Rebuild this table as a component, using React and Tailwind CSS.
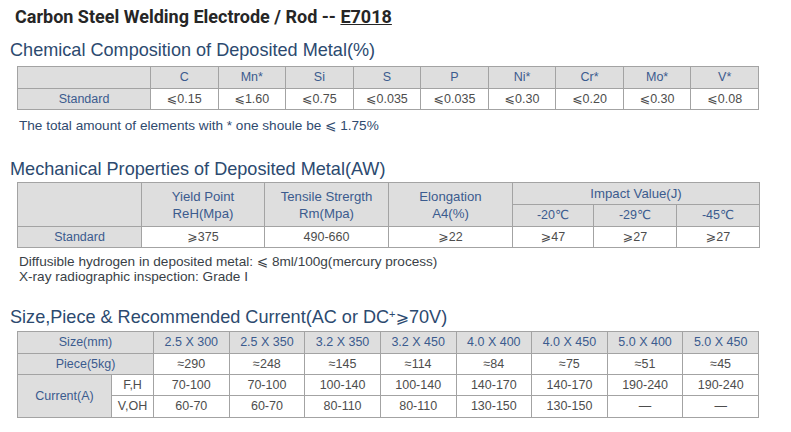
import React from "react";

const font = { fontFamily: '"Liberation Sans", Arial, "DejaVu Sans", sans-serif' };

const chemHead = ["C", "Mn*", "Si", "S", "P", "Ni*", "Cr*", "Mo*", "V*"];
const chemVals = ["⩽0.15", "⩽1.60", "⩽0.75", "⩽0.035", "⩽0.035", "⩽0.30", "⩽0.20", "⩽0.30", "⩽0.08"];

const sizes = [
  { size: "2.5 X 300", piece: "≈290", fh: "70-100", voh: "60-70" },
  { size: "2.5 X 350", piece: "≈248", fh: "70-100", voh: "60-70" },
  { size: "3.2 X 350", piece: "≈145", fh: "100-140", voh: "80-110" },
  { size: "3.2 X 450", piece: "≈114", fh: "100-140", voh: "80-110" },
  { size: "4.0 X 400", piece: "≈84", fh: "140-170", voh: "130-150" },
  { size: "4.0 X 450", piece: "≈75", fh: "140-170", voh: "130-150" },
  { size: "5.0 X 400", piece: "≈51", fh: "190-240", voh: "—" },
  { size: "5.0 X 450", piece: "≈45", fh: "190-240", voh: "—" },
];

const cell = "border border-[#a3a3a3] text-center p-0";
const gray = "bg-[#dedede] text-[#3b5b8e]";
const val = "bg-white text-[#4d4d4d]";

function Heading({ children, className }) {
  return (
    <h2 className={"pl-[10px] text-[18.1px] leading-[24px] text-[#2c4a6f] " + className}>
      {children}
    </h2>
  );
}

export default function App() {
  return (
    <div className="w-[791px] h-[432px] bg-white overflow-hidden" style={font}>
      <h1
        className="pl-[15px] pt-[5px] text-[18px] leading-[24px] font-bold text-[#262626]"
        style={{ fontFamily: 'Roboto, "Liberation Sans", sans-serif' }}
      >
        Carbon Steel Welding Electrode / Rod -- <span className="underline">E7018</span>
      </h1>

      <Heading className="mt-[9px]">Chemical Composition of Deposited Metal(%)</Heading>
      <div className="pl-[17px] mt-[4px]">
        <table className="table-fixed border-collapse w-[742px] text-[12.5px]">
          <colgroup>
            <col className="w-[133px]" />
            {chemHead.map((h) => (
              <col key={h} />
            ))}
          </colgroup>
          <tbody>
            <tr className="h-[22px]">
              <td className={cell + " " + gray}></td>
              {chemHead.map((h) => (
                <td key={h} className={cell + " " + gray}>{h}</td>
              ))}
            </tr>
            <tr className="h-[21px]">
              <td className={cell + " " + gray}>Standard</td>
              {chemVals.map((v, i) => (
                <td key={i} className={cell + " " + val}>{v}</td>
              ))}
            </tr>
          </tbody>
        </table>
      </div>
      <p className="pl-[19px] mt-[8px] text-[13.6px] leading-[16px] text-[#2f4a6e]">
        The total amount of elements with * one shoule be ⩽ 1.75%
      </p>

      <Heading className="mt-[23px]">Mechanical Properties of Deposited Metal(AW)</Heading>
      <div className="pl-[17px] mt-[1px]">
        <table className="table-fixed border-collapse w-[742px] text-[12.5px] leading-[17px]">
          <colgroup>
            <col className="w-[124px]" />
            <col className="w-[123px]" />
            <col className="w-[124px]" />
            <col className="w-[124px]" />
            <col className="w-[81px]" />
            <col className="w-[83px]" />
            <col className="w-[83px]" />
          </colgroup>
          <tbody>
            <tr className="h-[22px] text-[13.2px]">
              <td rowSpan={2} className={cell + " " + gray}></td>
              <td rowSpan={2} className={cell + " " + gray}>Yield Point<br />ReH(Mpa)</td>
              <td rowSpan={2} className={cell + " " + gray}>Tensile Strergth<br />Rm(Mpa)</td>
              <td rowSpan={2} className={cell + " " + gray}>Elongation<br />A4(%)</td>
              <td colSpan={3} className={cell + " " + gray}>Impact Value(J)</td>
            </tr>
            <tr className="h-[22px]">
              <td className={cell + " " + gray}>-20℃</td>
              <td className={cell + " " + gray}>-29℃</td>
              <td className={cell + " " + gray}>-45℃</td>
            </tr>
            <tr className="h-[21px]">
              <td className={cell + " " + gray}>Standard</td>
              <td className={cell + " " + val}>⩾375</td>
              <td className={cell + " " + val}>490-660</td>
              <td className={cell + " " + val}>⩾22</td>
              <td className={cell + " " + val}>⩾47</td>
              <td className={cell + " " + val}>⩾27</td>
              <td className={cell + " " + val}>⩾27</td>
            </tr>
          </tbody>
        </table>
      </div>
      <div className="pl-[19px] mt-[6px] text-[13.6px] leading-[15px] text-[#3a3f47]">
        <p>Diffusible hydrogen in deposited metal: ⩽ 8ml/100g(mercury process)</p>
        <p>X-ray radiographic inspection: Grade I</p>
      </div>

      <Heading className="mt-[21px]">
        Size,Piece &amp; Recommended Current(AC or DC<sup className="text-[11px]">+</sup>
        <span className="text-[16px]">⩾</span>70V)
      </Heading>
      <div className="pl-[17px] mt-[1px]">
        <table className="table-fixed border-collapse w-[742px] text-[12.5px]">
          <colgroup>
            <col className="w-[94px]" />
            <col className="w-[42px]" />
            {sizes.map((s) => (
              <col key={s.size} />
            ))}
          </colgroup>
          <tbody>
            <tr className="h-[22px]">
              <td colSpan={2} className={cell + " " + gray}>Size(mm)</td>
              {sizes.map((s) => (
                <td key={s.size} className={cell + " " + gray}>{s.size}</td>
              ))}
            </tr>
            <tr className="h-[21px]">
              <td colSpan={2} className={cell + " " + gray}>Piece(5kg)</td>
              {sizes.map((s) => (
                <td key={s.size} className={cell + " " + val}>{s.piece}</td>
              ))}
            </tr>
            <tr className="h-[21px]">
              <td rowSpan={2} className={cell + " " + gray}>Current(A)</td>
              <td className={cell + " " + val}>F,H</td>
              {sizes.map((s) => (
                <td key={s.size} className={cell + " " + val}>{s.fh}</td>
              ))}
            </tr>
            <tr className="h-[22px]">
              <td className={cell + " " + val}>V,OH</td>
              {sizes.map((s) => (
                <td key={s.size} className={cell + " " + val}>{s.voh}</td>
              ))}
            </tr>
          </tbody>
        </table>
      </div>
    </div>
  );
}
